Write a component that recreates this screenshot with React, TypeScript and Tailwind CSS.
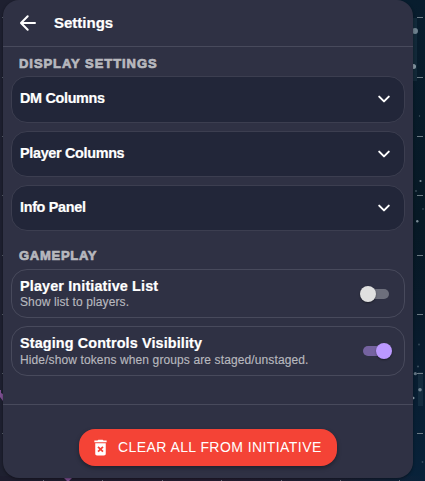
import type { ReactNode } from "react";

const dashes = [17, 77, 136, 195, 255, 314, 373, 433];
const ticks = [43, 102, 162, 221, 281, 340, 399];
const stars = [
  { x: 415, y: 31, r: 3, o: 0.55 },
  { x: 413.5, y: 66.5, r: 2.5, o: 0.7 },
  { x: 419.5, y: 116, r: 0.7, o: 0.35 },
  { x: 420.5, y: 181, r: 1.1, o: 0.65 },
  { x: 416, y: 191, r: 0.9, o: 0.3 },
  { x: 423, y: 209, r: 0.9, o: 0.25 },
  { x: 417.3, y: 221.3, r: 1.2, o: 0.65 },
  { x: 419, y: 344.5, r: 1, o: 0.25 },
  { x: 418, y: 366.5, r: 1, o: 0.3 },
  { x: 415.3, y: 373.7, r: 1.6, o: 0.5 },
  { x: 420, y: 389.8, r: 1.8, o: 0.55 },
  { x: 413.3, y: 398, r: 1.2, o: 0.8 },
  { x: 422.5, y: 462, r: 0.9, o: 0.25 },
];

function Backdrop() {
  return (
    <svg className="absolute inset-0" width="425" height="481" viewBox="0 0 425 481" aria-hidden="true">
      <defs>
        <linearGradient id="sky" x1="0" y1="0" x2="0" y2="1">
          <stop offset="0" stopColor="#081d2e" />
          <stop offset="0.45" stopColor="#071925" />
          <stop offset="0.65" stopColor="#081a2a" />
          <stop offset="1" stopColor="#08223a" />
        </linearGradient>
        <linearGradient id="floor" x1="0" y1="0" x2="1" y2="0">
          <stop offset="0" stopColor="#1d1d2e" />
          <stop offset="0.5" stopColor="#241d30" />
          <stop offset="0.8" stopColor="#1c2034" />
          <stop offset="1" stopColor="#08223a" />
        </linearGradient>
      </defs>
      <rect width="425" height="481" fill="#1e2030" />
      <rect x="395" width="30" height="481" fill="url(#sky)" />
      <rect y="476" width="425" height="5" fill="url(#floor)" />
      <rect x="413" y="18" width="4" height="63" fill="#5f8090" opacity="0.13" />
      <rect x="418" y="372" width="5" height="34" fill="#5f8090" opacity="0.15" />
      {dashes.map((y) => (
        <g key={y} fill="#84919a">
          <rect x="417" y={y} width="6" height="1" opacity="0.8" />
          <rect x="2" y={y} width="1" height="1" opacity="0.6" />
        </g>
      ))}
      {ticks.map((x) => (
        <rect key={x} x={x} y="480" width="1" height="1" fill="#9095a3" opacity="0.7" />
      ))}
      {stars.map((s) => (
        <circle key={s.y} cx={s.x} cy={s.y} r={s.r} fill="#b9c9d3" opacity={s.o} />
      ))}
      <path d="M0 390h1v3l2 1v7l-3-4z" fill="#7e4f92" />
      <path d="M64 478h8l-3 3h-2z" fill="#7e4f92" />
    </svg>
  );
}

function SectionTitle({ children, spacing }: { children: ReactNode; spacing: string }) {
  return (
    <h2 className={`h-[13px] pl-2 text-[13px] font-bold leading-[13px] text-[#b7b8be] [-webkit-text-stroke:0.7px_#b7b8be] ${spacing}`}>
      {children}
    </h2>
  );
}

function Accordion({ title, size, lift }: { title: string; size: string; lift?: boolean }) {
  return (
    <button className={`flex w-full items-center justify-between rounded-2xl border border-[#3c3e50] bg-[#222639] px-2 ${size}`}>
      <span className="pb-[3px] text-[14.4px] font-bold leading-5 tracking-[-0.32px] text-white [-webkit-text-stroke:0.2px_white]">
        {title}
      </span>
      <svg className={lift ? "mb-[2px]" : ""} width="24" height="24" viewBox="0 0 24 24" fill="none" stroke="white" strokeWidth="2" strokeLinecap="round" strokeLinejoin="round" aria-hidden="true">
        <path d="m7.2 9.6 4.8 4.8 4.8-4.8" />
      </svg>
    </button>
  );
}

function Toggle({ on }: { on: boolean }) {
  return (
    <span className="relative flex h-4 w-8 items-center justify-center" role="switch" aria-checked={on}>
      <span className={`h-[10px] w-[26px] rounded-full ${on ? "bg-[#7563a0]" : "bg-[#6d6f7c]"}`} />
      <span
        className={`absolute top-0 size-4 rounded-full shadow-[0_1px_2px_rgba(0,0,0,0.4)] ${on ? "right-0 bg-[#bb99ff]" : "left-0 bg-[#e0e0e0]"}`}
      />
    </span>
  );
}

function Setting({ title, note, on, size, heading }: { title: string; note: string; on: boolean; size: string; heading: string }) {
  return (
    <div className={`flex items-center justify-between rounded-2xl border border-[#484a5c] pl-2 pr-3 ${size}`}>
      <div>
        <div className={`text-[14.4px] font-bold leading-[17px] text-white [-webkit-text-stroke:0.2px_white] ${heading}`}>{title}</div>
        <div className="text-[12px] leading-[14px] tracking-[0.115px] text-[#b7b8be] [-webkit-text-stroke:0.15px_#b7b8be]">{note}</div>
      </div>
      <Toggle on={on} />
    </div>
  );
}

export default function App() {
  return (
    <div className="relative h-[481px] w-[425px] overflow-hidden font-['Liberation_Sans',Arial,sans-serif]">
      <Backdrop />
      <main className="relative ml-[3px] flex h-[478px] w-[410px] flex-col rounded-2xl bg-[#2f3144] shadow-[0_1px_3px_rgba(0,0,0,0.4)]">
        <header className="flex h-[47px] items-center border-b border-[#484a5c] pl-[13px]">
          <svg width="24" height="24" viewBox="0 0 24 24" fill="none" stroke="white" strokeWidth="2" strokeLinecap="round" strokeLinejoin="round" aria-hidden="true">
            <path d="M19 12H5.3M11.7 5.3 5 12l6.7 6.7" />
          </svg>
          <h1 className="ml-[14px] text-[15px] font-bold leading-5 text-white [-webkit-text-stroke:0.2px_white]">Settings</h1>
        </header>
        <div className="flex h-[357px] flex-col px-2 pt-[10px]">
          <SectionTitle spacing="tracking-[0.94px]">DISPLAY SETTINGS</SectionTitle>
          <div className="mt-[6px] flex flex-col gap-2">
            <Accordion title="DM Columns" size="h-[47px]" lift />
            <Accordion title="Player Columns" size="h-[46px]" />
            <Accordion title="Info Panel" size="h-[46px]" />
          </div>
          <div className="mt-[18px]">
            <SectionTitle spacing="tracking-[0.72px]">GAMEPLAY</SectionTitle>
          </div>
          <div className="mt-[7px] flex flex-col gap-2">
            <Setting
              title="Player Initiative List"
              note="Show list to players."
              on={false}
              size="h-[49px]"
              heading="tracking-[0.14px]"
            />
            <Setting
              title="Staging Controls Visibility"
              note="Hide/show tokens when groups are staged/unstaged."
              on
              size="h-[50px]"
              heading="mb-px tracking-[0.12px]"
            />
          </div>
        </div>
        <footer className="flex justify-center border-t border-[#484a5c] pt-6">
          <button className="flex h-[37px] w-[258px] items-center rounded-2xl bg-[#f44336] pl-[11px] text-white shadow-[0_2px_4px_rgba(0,0,0,0.35)]">
            <svg width="21" height="21" viewBox="0 0 24 24" fill="white" aria-hidden="true">
              <path d="M6 19c0 1.1.9 2 2 2h8c1.1 0 2-.9 2-2V7H6v12zm2.46-7.12 1.41-1.41L12 12.59l2.12-2.12 1.41 1.41L13.41 14l2.12 2.12-1.41 1.41L12 15.41l-2.12 2.12-1.41-1.41L10.59 14l-2.13-2.12zM15.5 4l-1-1h-5l-1 1H5v2h14V4z" />
            </svg>
            <span className="ml-[7px] whitespace-nowrap pb-[2px] text-[14px] leading-5 tracking-[0.43px]">CLEAR ALL FROM INITIATIVE</span>
          </button>
        </footer>
      </main>
    </div>
  );
}
